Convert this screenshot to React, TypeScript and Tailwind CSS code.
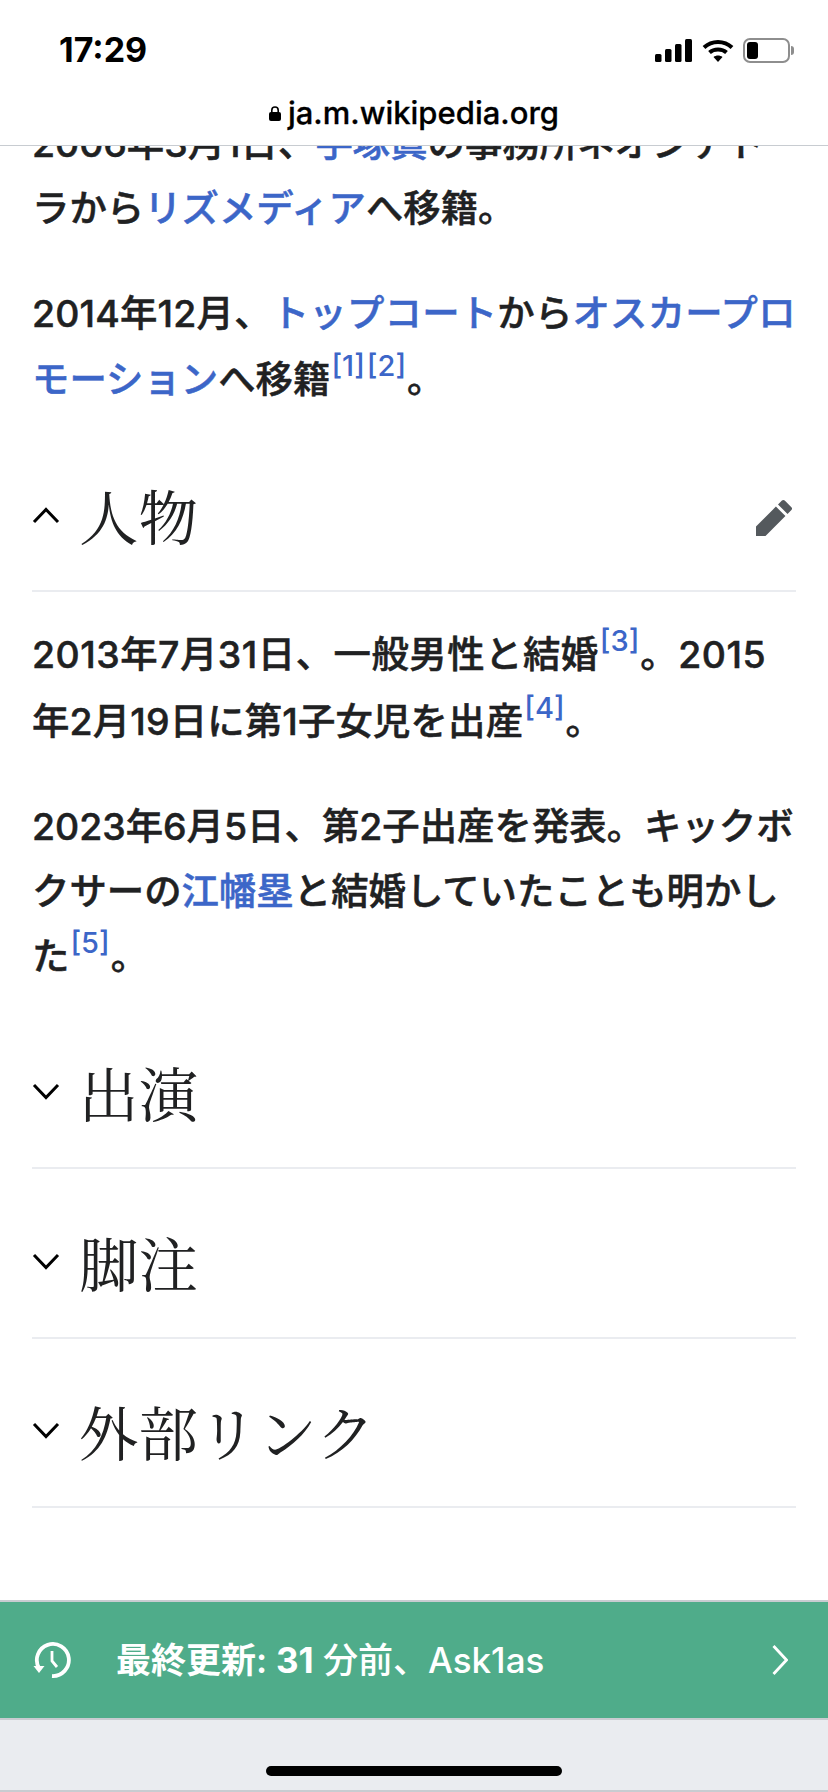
const A = ({ children }: { children: React.ReactNode }) => <span className="text-[#3c66c8]">{children}</span>;
const Sup = ({ children }: { children: React.ReactNode }) => (
  <span className="relative top-[-17px] text-[29px] font-medium [-webkit-text-stroke:0px] tracking-normal text-[#3c66c8] leading-none mx-[1px]">{children}</span>
);

function Chevron({ up }: { up?: boolean }) {
  return (
    <svg viewBox="0 0 28 18" className="w-[28px] h-[18px] shrink-0 mt-[-10px]" fill="none" stroke="#000" strokeWidth="3">
      <path d={up ? "M2 16 L14 3.5 L26 16" : "M2 2 L14 14.5 L26 2"} />
    </svg>
  );
}

function Section({ title, open, edit }: { title: string; open?: boolean; edit?: boolean }) {
  return (
    <div className="flex items-center h-[142px] border-b-2 border-[#eaecf0] mb-[27.5px]">
      <Chevron up={open} />
      <span className="ml-[19px] mb-[10px] text-[59.5px] font-normal text-[#202122] [-webkit-text-stroke:0px] font-['Noto_Serif_CJK_JP','Noto_Sans_CJK_JP',serif] leading-none">{title}</span>
      {edit && (
        <svg viewBox="0 0 20 20" className="ml-auto w-[40px] h-[40px] mr-[2px] mt-[-4px]" fill="#54595d">
          <path d="M16.77 8l1.94-2a1 1 0 000-1.41l-3.34-3.3a1 1 0 00-1.41 0L12 3.23zm-5.81-3.71L1 14.25V19h4.75l9.96-9.96z" />
        </svg>
      )}
    </div>
  );
}

export default function App() {
  return (
    <div className="w-[828px] h-[1792px] flex flex-col bg-white overflow-hidden font-['Inter','Noto_Sans_CJK_JP',sans-serif] text-[#202122]">
      <header className="h-[146px] shrink-0 bg-white border-b border-[#c8ccd1] relative z-10">
        <div className="flex items-center justify-between h-[76px] pt-[24px] pl-[59px] pr-[34px]">
          <span className="text-[34px] font-bold text-black font-['Inter',sans-serif] leading-none">17:29</span>
          <div className="flex items-center gap-[10px]">
            <svg viewBox="0 0 37 23" className="w-[37px] h-[23px]" fill="#000">
              <rect x="0" y="15" width="6.5" height="8" rx="1.5" />
              <rect x="10" y="10" width="6.5" height="13" rx="1.5" />
              <rect x="20" y="5" width="6.5" height="18" rx="1.5" />
              <rect x="30" y="0" width="7" height="23" rx="1.5" />
            </svg>
            <svg viewBox="0 0 32 23" className="w-[32px] h-[23px]" fill="none" stroke="#000" strokeWidth="4">
              <path d="M2 8.5 C10 1 22 1 30 8.5" />
              <path d="M7.5 13.5 C12 9.5 20 9.5 24.5 13.5" />
              <path d="M16 23 L11.5 18 C14 16 18 16 20.5 18 Z" fill="#000" stroke="none" />
            </svg>
            <div className="flex items-center ml-[-1px]">
              <div className="w-[47px] h-[25px] border-2 border-[#8e8e8e] rounded-[7px] p-[2px] flex">
                <div className="w-[11px] h-full bg-black rounded-[3px]" />
              </div>
              <div className="w-[3px] h-[9px] bg-[#8e8e8e] rounded-r-[3px] ml-[1px]" />
            </div>
          </div>
        </div>
        <div className="flex items-center justify-center gap-[7px] mt-[18px]">
          <svg viewBox="0 0 12 15" className="w-[12px] h-[15px]" fill="#000">
            <path d="M2 6 V4.2 a4 4 0 0 1 8 0 V6 H8.4 V4.2 a2.4 2.4 0 0 0-4.8 0 V6 Z" />
            <rect x="0" y="6" width="12" height="9" rx="2" />
          </svg>
          <span className="text-[31px] font-medium [-webkit-text-stroke:0.3px] text-black leading-[38px]">ja.m.wikipedia.org</span>
        </div>
      </header>

      <main className="flex-1 min-h-0 overflow-hidden px-[32px] text-[37.4px] font-medium [-webkit-text-stroke:0.5px] leading-[65px]">
        <div className="mt-[-35px]">
          <p className="whitespace-nowrap">2006年3月1日、<A>手塚眞</A>の事務所ネオンテト</p>
          <p className="whitespace-nowrap">ラから<A>リズメディア</A>へ移籍。</p>
          <p className="whitespace-nowrap mt-[40px] tracking-[0.2px]">2014年12月、<A>トップコート</A>から<A>オスカープロ</A></p>
          <p className="whitespace-nowrap mt-[1px]"><A>モーション</A>へ移籍<Sup>[1]</Sup><Sup>[2]</Sup>。</p>
        </div>
        <div className="mt-[37.5px] pb-[3px]">
          <Section title="人物" open edit />
        </div>
        <p className="whitespace-nowrap tracking-[0.5px]">2013年7月31日、一般男性と結婚<Sup>[3]</Sup>。2015</p>
        <p className="whitespace-nowrap mt-[2px] tracking-[0.15px]">年2月19日に第1子女児を出産<Sup>[4]</Sup>。</p>
        <p className="whitespace-nowrap mt-[40px]">2023年6月5日、第2子出産を発表。キックボ</p>
        <p className="whitespace-nowrap">クサーの<A>江幡塁</A>と結婚していたことも明かし</p>
        <p className="whitespace-nowrap">た<Sup>[5]</Sup>。</p>
        <div className="mt-[38px]">
          <Section title="出演" />
          <Section title="脚注" />
          <Section title="外部リンク" />
        </div>
      </main>

      <footer className="shrink-0">
        <div className="h-[120px] bg-[#4fac8a] border-y-2 border-[#c8ccd1] flex items-center pl-[33px] pr-[40px] text-white">
          <svg viewBox="0 0 38 38" className="w-[38px] h-[38px]" fill="none" stroke="#fff" strokeWidth="3.8">
            <path d="M6 27 A16 16 0 1 1 19 35" />
            <path d="M0.5 25 H11.5 L6 32 Z" fill="#fff" stroke="none" />
            <path d="M19 10 V20 L24 26" strokeWidth="2.8" />
          </svg>
          <span className="ml-[45px] text-[35px] font-medium leading-none">
            <span className="font-semibold">最終更新: </span><span className="font-bold">31</span> 分前、Ask1as
          </span>
          <svg viewBox="0 0 16 30" className="ml-auto w-[16px] h-[30px]" fill="none" stroke="#fff" strokeWidth="2.8">
            <path d="M1.5 1 L14.5 15 L1.5 29" />
          </svg>
        </div>
        <div className="h-[72px] bg-[#eaecf0] border-b-2 border-[#c8ccd1] flex justify-center pt-[46px]">
          <div className="w-[296px] h-[10px] rounded-full bg-black" />
        </div>
      </footer>
    </div>
  );
}
